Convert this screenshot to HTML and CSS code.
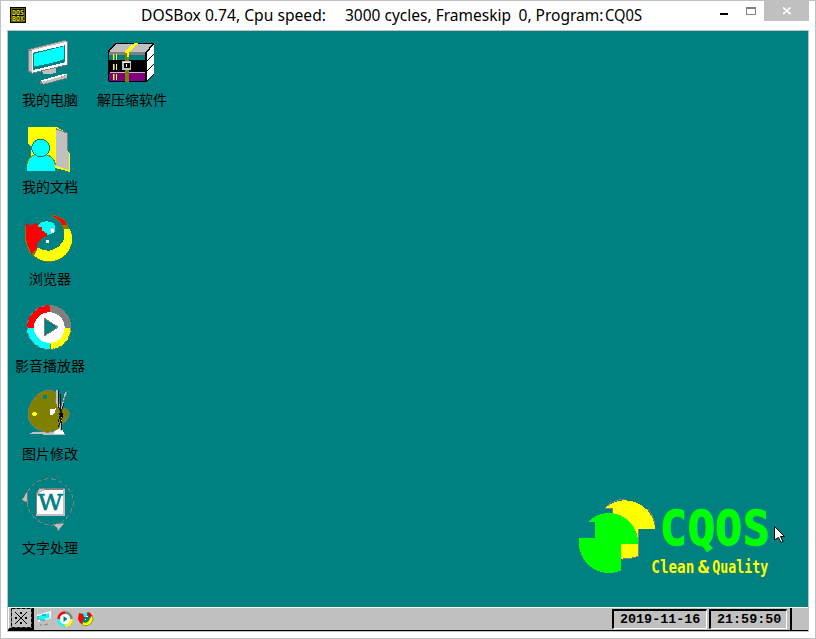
FILE: index.html
```html
<!DOCTYPE html>
<html lang="zh-CN">
<head>
<meta charset="utf-8">
<title>DOSBox</title>
<link rel="stylesheet" href="styles.css">
</head>
<body>
<div class="window">
  <header class="titlebar">
    <svg class="app-icon" width="16" height="16" viewBox="0 0 16 16">
      <rect width="16" height="16" fill="#000"/>
      <rect x="1.5" y="1.5" width="13" height="13" fill="none" stroke="#686000"/>
      <text class="dos" x="2" y="7.5" textLength="12" lengthAdjust="spacingAndGlyphs">DOS</text>
      <text class="dos" x="2" y="14" textLength="12" lengthAdjust="spacingAndGlyphs">BOX</text>
    </svg>
    <svg class="caption" width="520" height="29" viewBox="135 1 520 29">
      <text x="141" y="21" textLength="185" lengthAdjust="spacingAndGlyphs">DOSBox 0.74, Cpu speed:</text>
      <text x="345" y="21" textLength="166" lengthAdjust="spacingAndGlyphs">3000 cycles, Frameskip</text>
      <text x="518.500" y="21" textLength="85" lengthAdjust="spacingAndGlyphs">0, Program:</text>
      <text x="605" y="21" textLength="37" lengthAdjust="spacingAndGlyphs">CQ0S</text>
    </svg>
    <div class="controls">
      <span class="minimize"></span>
      <span class="maximize"></span>
      <span class="close"><svg width="8" height="8" viewBox="0 0 8 8"><path d="M0 .5L7.500 7M7.500 .5L0 7" stroke="#fff" stroke-width="1.700"/></svg></span>
    </div>
  </header>

  <div class="screen">
    <main class="desktop">
      <div class="column">
        <div class="item computer">
          <svg width="83" height="57" viewBox="0 0 249 171">
            <path d="M98 104L145 99L145 115L130 121H108Z" fill="#c0c0c0"/>
            <path d="M97 141L171 120L178 123V133L106 152L97 149Z" fill="#808080"/>
            <path d="M97 140L170 119L177 122L106 145Z" fill="#fff"/>
            <path d="M101 144L177 123V131L106 150Z" fill="#c0c0c0"/>
            <path d="M60 46L171 18L181 23V93L72 119L60 112Z" fill="#808080"/>
            <path d="M63 47L171 20L178 25L72 49Z" fill="#c0c0c0"/>
            <path d="M63 49L71 52V113L63 109Z" fill="#c0c0c0"/>
            <path d="M71 49L178 23V91L72 116Z" fill="#fff"/>
            <path d="M76 56L171 34V85L76 108Z" fill="#008080"/>
            <path d="M78 59L168 37V76Q120 91 78 97Z" fill="#0ff"/>
          </svg>
          <span class="label">我的电脑</span>
        </div>
        <div class="item documents">
          <svg width="83" height="58" viewBox="0 0 249 174">
            <path d="M60 20H144L178 38V94L186 99V156L143 144L130 140H70V80L60 72Z" fill="#ff0"/>
            <path d="M143 26L177 39V94L184 99V151L143 137Z" fill="#c0c0c0"/>
            <path d="M143 26L177 39V94" fill="none" stroke="#808080" stroke-width="3"/>
            <path d="M56 154V135Q57 111 79 105H118Q141 113 142 136V154Z" fill="#0ff"/>
            <path d="M56 136Q58 112 79 105M118 105Q141 113 142 136" fill="none" stroke="#808000" stroke-width="3"/>
            <ellipse cx="98" cy="84" rx="27" ry="26" fill="#0ff" stroke="#008080" stroke-width="3"/>
          </svg>
          <span class="label">我的文档</span>
        </div>
        <div class="item browser">
          <svg width="83" height="62" viewBox="0 0 249 186">
            <g transform="translate(2 8)">
              <path d="M163 51H181Q197 82 185 111Q171 151 119 154Q89 152 68 131L84 105Q95 122 115 124Q160 123 169 82Q168 66 163 51Z" fill="#808000"/>
              <path d="M165 56H184Q197 88 183 114Q165 151 119 152Q93 150 77 135L88 110Q100 120 123 120Q158 112 167 81Z" fill="#ff0"/>
              <path d="M160 44H178L183 56H163Z" fill="#808000"/>
              <path d="M128 13Q166 18 178 44H161Q151 25 128 16Z" fill="#f00" stroke="#808000" stroke-width="2"/>
            </g>
            <path d="M96 44Q124 34 139 48Q145 63 138 74L122 80H102L88 58Z" fill="#0ff"/>
            <path d="M53 50L60 43L64 53L84 47L88 42L90 56H100L104 69L117 76L118 83L103 90L86 107V124L70 139L58 114L52 97V55Z" fill="#f00"/>
            <path d="M53 55V97L58 114L69 137" fill="none" stroke="#808000" stroke-width="3"/>
            <rect x="126" y="60" width="13" height="13" fill="#c0c0c0"/>
            <path d="M129 63h9v12h-9zM115 95h9v11h-9z" fill="#fff"/>
          </svg>
          <span class="label">浏览器</span>
        </div>
        <div class="item player">
          <svg width="83" height="59" viewBox="0 0 249 177">
            <circle cx="123" cy="88" r="65" fill="#fff"/>
            <path d="M123 21A66 67 0 0 0 57 91H77A46 47 0 0 1 125 43V21Z" fill="#f00"/>
            <path d="M125 21A65 67 0 0 1 189 91H170A45 47 0 0 0 125 43Z" fill="#808080"/>
            <path d="M189 91A64 64 0 0 1 126 154V135A46 45 0 0 0 169 91Z" fill="#ff0"/>
            <path d="M57 91A66 64 0 0 0 126 154V135A48 46 0 0 1 78 91Z" fill="#0ff"/>
            <circle cx="123" cy="88" r="66" fill="none" stroke="#808080" stroke-width="3" stroke-dasharray="10 12"/>
            <path d="M126 137V154" stroke="#808000" stroke-width="3"/>
            <path d="M109 61L150 87L109 114Z" fill="#008080" stroke="#808080" stroke-width="3"/>
          </svg>
          <span class="label">影音播放器</span>
        </div>
        <div class="item picture">
          <svg width="83" height="60" viewBox="0 0 249 180">
            <path d="M63 148L75 141H165L170 149H112L108 153L103 148Z" fill="#c0c0c0"/>
            <path d="M137 137L161 128L169 148H139Z" fill="#fff"/>
            <path d="M120 15Q148 17 154 40L155 70Q180 67 184 85Q182 108 164 114Q158 137 118 143Q75 137 60 101Q57 74 69 53Q87 20 120 15Z" fill="#808000" stroke="#808080" stroke-width="2"/>
            <path d="M105 31h12v12h-12z" fill="#008080"/>
            <path d="M72 84L77 81H83L87 84V90L83 93H77L72 90Z" fill="#ff0"/>
            <path d="M125 74L143 70L142 82L134 91L126 88Z" fill="#fff"/>
            <path d="M144 16H150V43L157 63L151 70L143 53Z" fill="#c0c0c0"/>
            <path d="M174 20L166 48L159 76V137" fill="none" stroke="#c0c0c0" stroke-width="4"/>
            <path d="M151 14V65L164 93L151 125M156 28L160 135M168 54L150 111" fill="none" stroke="#000" stroke-width="2.500"/>
            <path d="M178 18L166 51M143 55V38M173 92V110" stroke="#808080" stroke-width="3"/>
            <path d="M151 84H166V96H157Z" fill="#000"/>
          </svg>
          <span class="label">图片修改</span>
        </div>
        <div class="item writer">
          <svg width="83" height="66" viewBox="0 0 249 198">
            <path d="M58 58Q80 18 124 17Q153 18 179 43M180 45Q205 77 192 106Q183 136 155 151M57 87Q62 124 90 143Q109 156 136 158" fill="none" stroke="#808080" stroke-width="3" stroke-dasharray="13 9"/>
            <path d="M58 55L42 81L60 89L57 76ZM134 154L168 151L150 174L147 164Z" fill="#c0c0c0" stroke="#808080" stroke-width="2"/>
            <path d="M84 58L95 46H171V128H84Z" fill="#808080"/>
            <path d="M88 61L99 50H164V124H88Z" fill="#fff"/>
            <path d="M168 49V126H85" fill="none" stroke="#c0c0c0" stroke-width="4"/>
            <path d="M86 65L93 49L107 47V53L94 60Z" fill="#c0c0c0"/>
            <text class="letter" x="89" y="112" textLength="75" lengthAdjust="spacingAndGlyphs">W</text>
          </svg>
          <span class="label">文字处理</span>
        </div>
      </div>
      <div class="column second">
        <div class="item archive">
          <svg width="83" height="57" viewBox="0 0 249 171">
            <path d="M54 51L76 27H189L193 31V119L169 145H58L54 141Z" fill="#000"/>
            <path d="M59 51L79 30H187L166 55H59Z" fill="#c0c0c0"/>
            <path d="M58 55H166V62H58Z" fill="#808080"/>
            <path d="M58 63H166V79H58Z" fill="#008080"/>
            <path d="M58 117H166V142H58Z" fill="#800080"/>
            <path d="M60 115H166" stroke="#c0c0c0" stroke-width="3"/>
            <path d="M170 56L191 33V60L170 80ZM170 84L191 64V90L170 110ZM170 114L191 94V119L170 140Z" fill="#fff"/>
            <path d="M104 56H118V143H104Z" fill="#808000"/>
            <path d="M104 52L132 28H145L118 55V70H112V58H104Z" fill="#ff0"/>
            <path d="M69 60V77M78 60V77M69 91V108M78 91V108M69 120V137M78 120V137" stroke="#ff0" stroke-width="3"/>
            <path d="M73 60V77M73 91V108M73 120V137" stroke="#808080" stroke-width="3"/>
            <rect x="98" y="84" width="23" height="21" fill="#000" stroke="#c0c0c0" stroke-width="5"/>
            <path d="M100 85H120M110 91V99" stroke="#fff" stroke-width="3"/>
          </svg>
          <span class="label">解压缩软件</span>
        </div>
      </div>

      <svg class="brand" width="230" height="110" viewBox="0 0 690 330">
        <path d="M105 54A90 90 0 0 1 255 116H206V198Q184 208 153 207V160H128V54Z" fill="#ff0"/>
        <path d="M105 54H128V70M206 117V198Q184 208 153 207M105 54Q131 27 165 27M232 56Q253 81 255 105" fill="none" stroke="#808080" stroke-width="3"/>
        <path d="M54 97Q80 69 116 69Q153 69 180 96Q204 122 205 162H153V242Q134 249 116 249A90 92 0 0 1 27 144H76V97Z" fill="#0f0"/>
        <text class="name" y="165"><tspan x="270" textLength="80" lengthAdjust="spacingAndGlyphs">C</tspan><tspan x="353" textLength="82" lengthAdjust="spacingAndGlyphs">Q</tspan><tspan x="436" textLength="80" lengthAdjust="spacingAndGlyphs">O</tspan><tspan x="519" textLength="80" lengthAdjust="spacingAndGlyphs">S</tspan></text>
        <text class="slogan" x="244" y="248" textLength="129" lengthAdjust="spacingAndGlyphs">Clean</text>
        <text class="slogan" x="383" y="248" textLength="34" lengthAdjust="spacingAndGlyphs">&amp;</text>
        <text class="slogan" x="427" y="248" textLength="168" lengthAdjust="spacingAndGlyphs">Quality</text>
      </svg>
      <svg class="pointer" width="12" height="18" viewBox="0 0 12 18">
        <path d="M.5 .5L10.500 10.500H6.500L9 15.500L7 16.500L4.500 11.500L.5 14Z" fill="#fff" stroke="#000"/>
      </svg>
    </main>

    <footer class="taskbar">
      <div class="start">
        <svg width="21" height="20" viewBox="0 0 21 20">
          <rect x=".5" y=".5" width="20" height="19" fill="none" stroke="#000" stroke-dasharray="4 1"/>
          <path d="M4 4L16 16M16 4L4 16" stroke="#000"/>
          <path d="M9 4h2v2h-2zM9 14h2v2h-2zM4 9h2v2H4zM14 9h2v2h-2z" fill="#000"/>
        </svg>
      </div>
      <div class="shortcuts">
        <svg width="15" height="16" viewBox="0 0 15 16">
          <path d="M0 4L14 0V7L1 11Z" fill="#fff"/>
          <path d="M1 5L12 2V7L2 9Z" fill="#0ff"/>
          <path d="M1 5V9M5 4H9M3 9H8" stroke="#008080"/>
          <path d="M7 14L11 13M3 14H5" stroke="#808080"/>
        </svg>
        <svg width="16" height="16" viewBox="0 0 16 16">
          <circle cx="8" cy="8" r="6" fill="#fff"/>
          <g fill="none" stroke-width="2.500"><path d="M1.500 8A6.500 6.500 0 0 1 8 1.500" stroke="#f00"/><path d="M8 1.500A6.500 6.500 0 0 1 14.500 8" stroke="#808080"/><path d="M14.500 8A6.500 6.500 0 0 1 8 14.500" stroke="#ff0"/><path d="M8 14.500A6.500 6.500 0 0 1 1.500 8" stroke="#0ff"/></g>
          <path d="M6.500 5L10.500 8L6.500 11Z" fill="#008080"/>
        </svg>
        <svg width="16" height="16" viewBox="0 0 16 16">
          <circle cx="8" cy="8" r="6" fill="#008080"/>
          <path d="M14 4Q16 8 13.500 12Q10 16 4 14L5 11Q10 13 12 7Z" fill="#ff0" stroke="#808000" stroke-width=".7"/>
          <path d="M1 2L5 3V5L7 7L4 9V13L2 12L0 8Z" fill="#f00"/>
          <path d="M9 1Q13 1 14 5L11 6Z" fill="#f00"/>
          <path d="M5 2H9V6H6Z" fill="#0ff"/>
          <path d="M8 5h2v1H8zM7 8h1v1H7z" fill="#fff"/>
        </svg>
      </div>
      <div class="clock">
        <time class="date">2019-11-16</time>
        <time class="time">21:59:50</time>
      </div>
      <div class="edge"></div>
    </footer>
  </div>
</div>
</body>
</html>
```
FILE: styles.css
```css
* { box-sizing: border-box; }

body {
  margin: 0;
  background: #fff;
  font-family: "Noto Sans", "Noto Sans CJK SC", sans-serif;
}

svg { display: block; flex: none; }

.window {
  width: 816px;
  height: 639px;
  border: 1px solid #c0c0c0;
  background: #fff;
  overflow: hidden;
}

.titlebar {
  display: flex;
  height: 29px;
  padding-left: 9px;
}
.app-icon { margin-top: 6px; }
.dos {
  font: bold 7px "DejaVu Sans Mono", monospace;
  fill: #e8e000;
}
.caption { margin-left: 109px; }
.caption text {
  font: 15.500px "Noto Sans", sans-serif;
  fill: #000;
}

.controls {
  display: flex;
  margin-left: 64px;
}
.minimize {
  width: 8px;
  height: 2px;
  margin: 12px 18px 0 1px;
  background: #000;
}
.maximize {
  width: 10px;
  height: 8px;
  margin: 6px 8px 0 0;
  border: 1px solid #808080;
  border-top-width: 2px;
}
.close {
  display: grid;
  place-items: center;
  width: 45px;
  height: 20px;
  background: #c0c0c0;
}

.screen {
  width: 802px;
  height: 602px;
  margin-left: 6px;
  border: 1px solid #c0c0c0;
}

.desktop {
  position: relative;
  display: flex;
  height: 576px;
  padding-top: 3px;
  background: #008080;
}
.column { width: 83px; }
.second { margin-left: -1px; }

.item svg { shape-rendering: crispEdges; }
.label {
  display: block;
  height: 18px;
  font: 14px/16px "Noto Sans CJK SC", sans-serif;
  text-align: center;
  text-indent: 1px;
  white-space: nowrap;
  color: #000;
}
.computer { margin-bottom: 11px; }
.documents { margin-bottom: 12px; }
.browser,
.player,
.picture { margin-bottom: 10px; }
.letter {
  font: 68px "DejaVu Serif", serif;
  fill: #008080;
  stroke: #008080;
  stroke-width: 2px;
}

.brand {
  position: absolute;
  left: 562px;
  top: 459px;
  overflow: visible;
  shape-rendering: crispEdges;
}
.name {
  font: bold 146px "DejaVu Sans Mono", monospace;
  fill: #0f0;
  stroke: #0f0;
  stroke-width: 4px;
}
.slogan {
  font: bold 51px "DejaVu Sans Mono", monospace;
  fill: #ff0;
}
.pointer {
  position: absolute;
  left: 766px;
  top: 495px;
}

.taskbar {
  display: flex;
  height: 24px;
  border-top: 1px solid #fff;
  border-bottom: 1px solid #000;
  background: #c0c0c0;
}
.start {
  width: 26px;
  height: 22px;
  padding-left: 2px;
  border-right: 2px solid #000;
  border-bottom: 2px solid #000;
  border-left: 1px solid #fff;
}
.shortcuts {
  display: flex;
  gap: 5px;
  padding: 3px 0 0 3px;
}
.clock {
  display: flex;
  gap: 2px;
  margin: 1px 3px 0 auto;
}
.clock time {
  height: 20px;
  border: solid #fff;
  border-width: 2px 1px 1px 2px;
  border-top-color: #000;
  border-left-color: #000;
  font: bold 13.400px/17px "Liberation Mono", monospace;
  color: #000;
  white-space: nowrap;
}
.date {
  width: 95px;
  padding-left: 6px;
}
.time {
  width: 78px;
  padding-left: 6px;
}
.edge {
  width: 18px;
  border-left: 2px solid #000;
}
```
